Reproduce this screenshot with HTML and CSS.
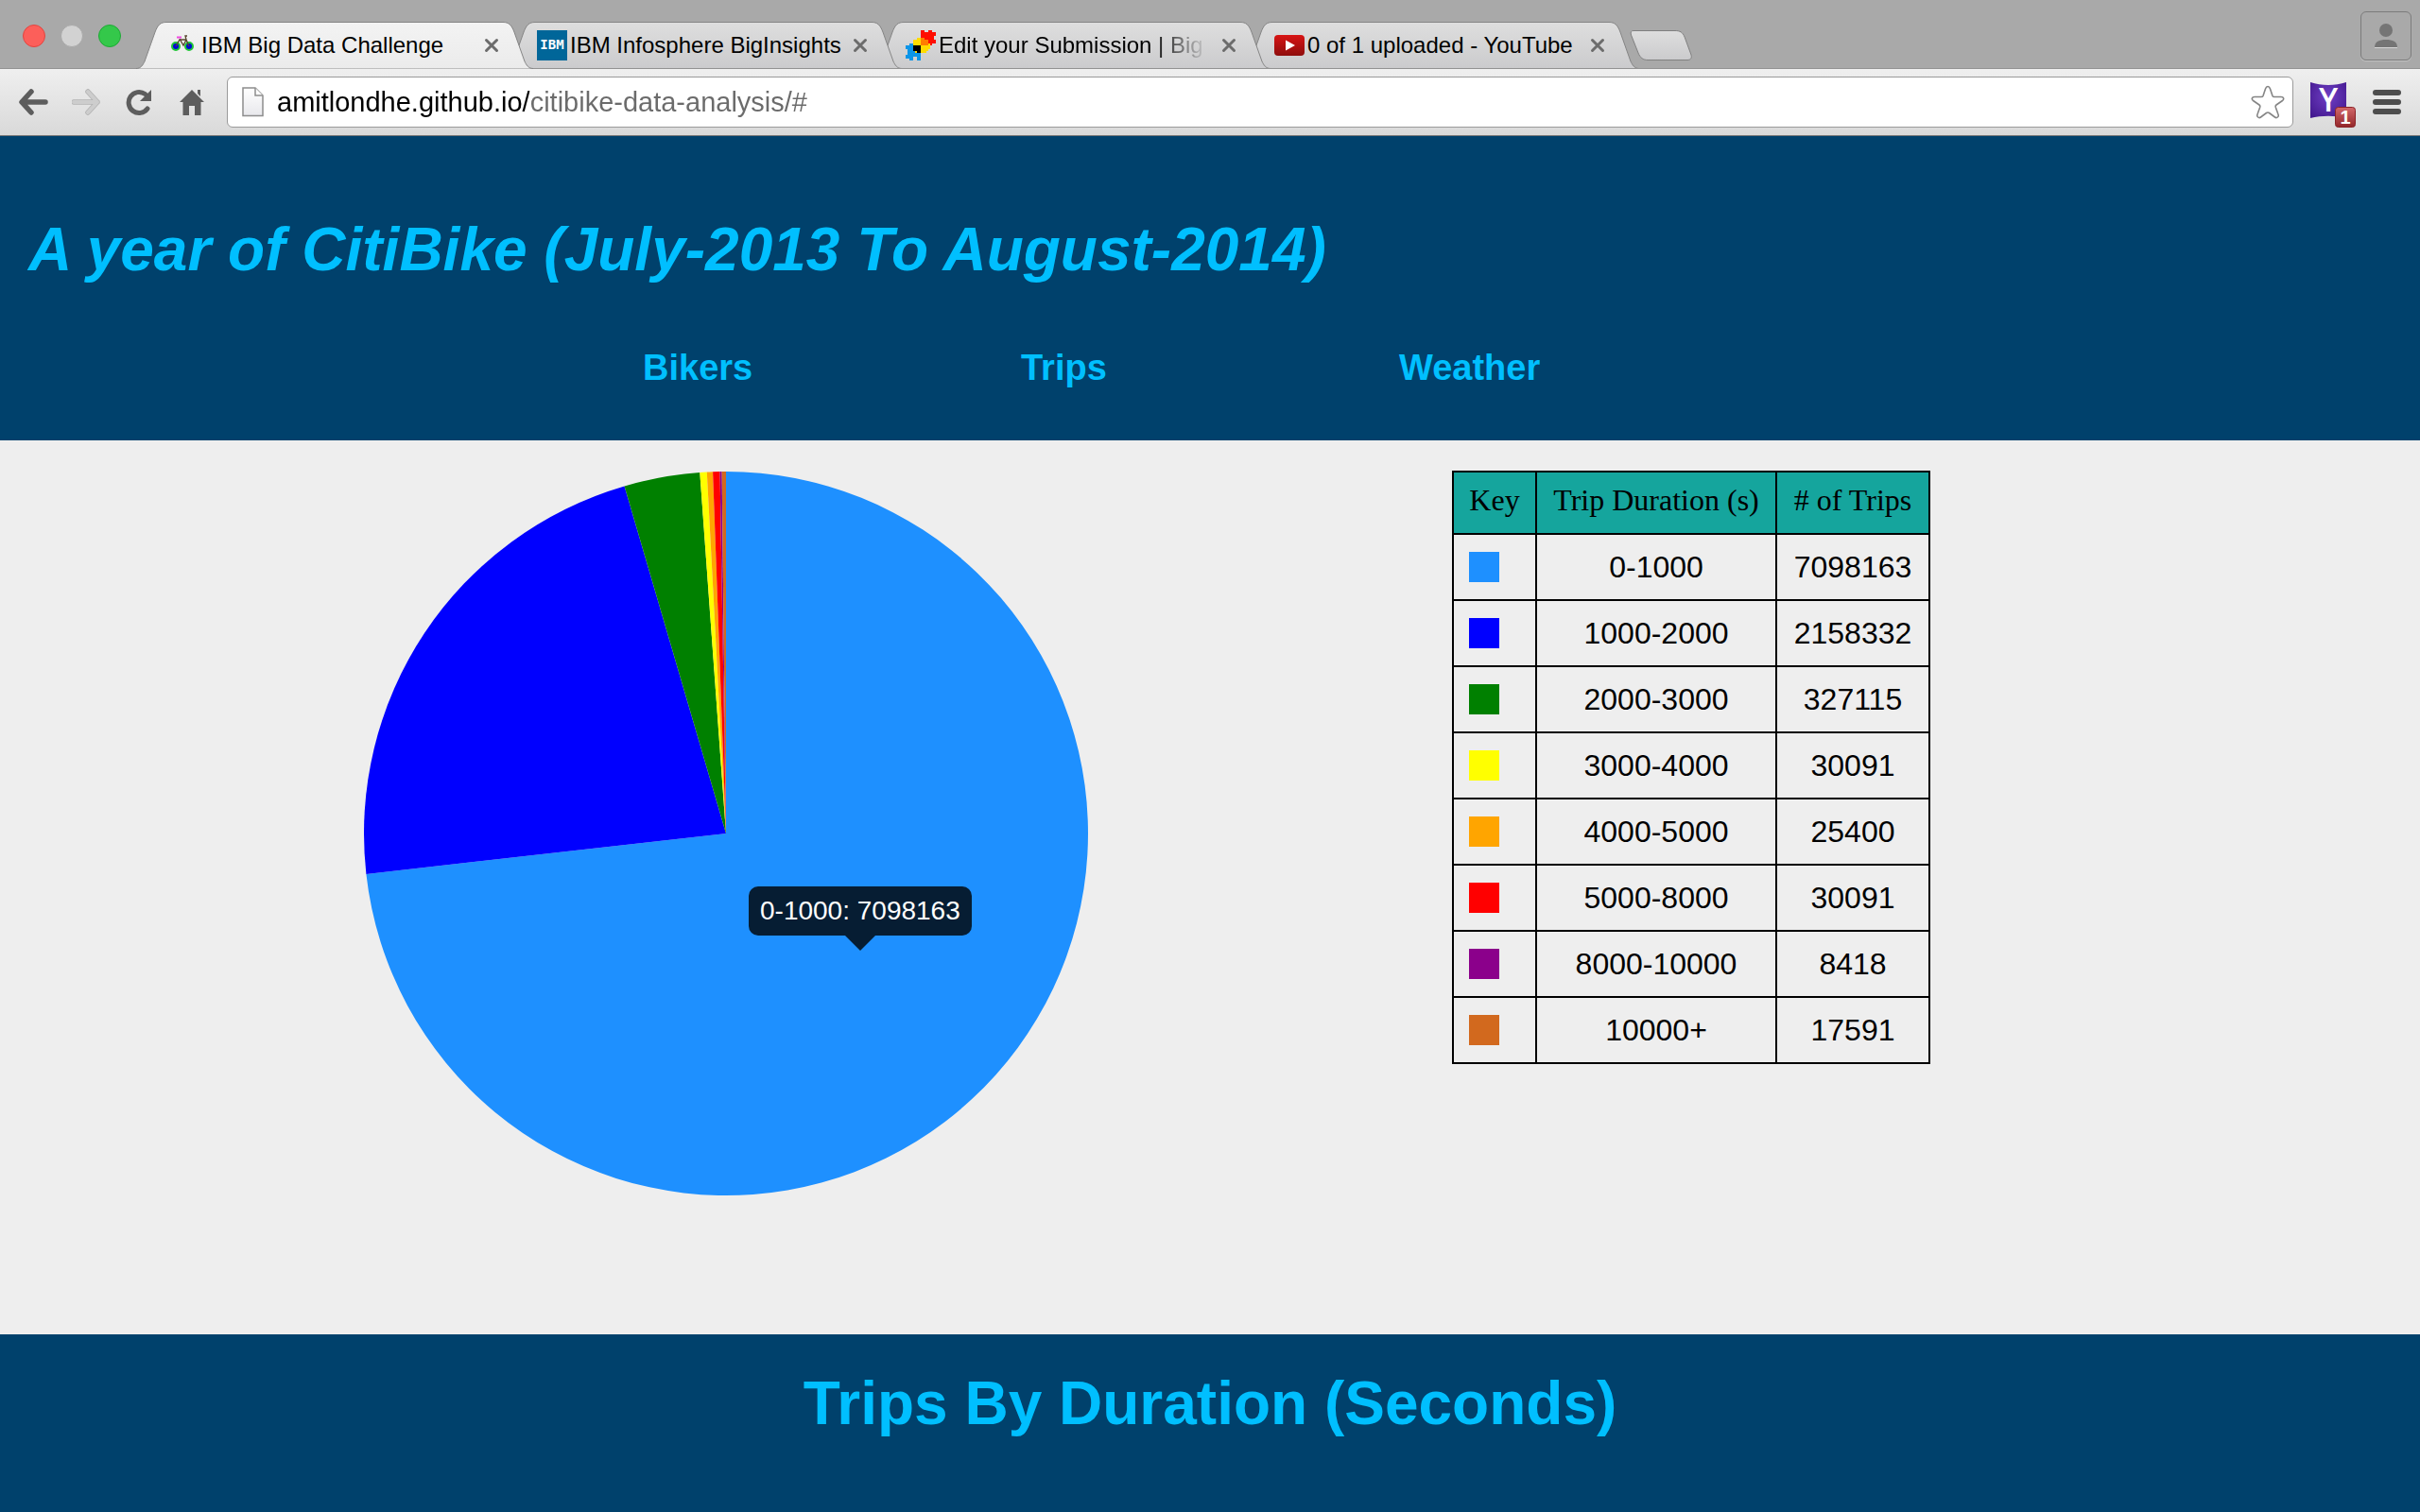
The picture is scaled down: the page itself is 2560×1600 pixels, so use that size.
FILE: index.html
```html
<!DOCTYPE html>
<html lang="en">
<head>
<meta charset="utf-8">
<title>IBM Big Data Challenge</title>
<link rel="stylesheet" href="styles.css">
</head>
<body>
<svg class="defs" aria-hidden="true">
  <defs>
    <linearGradient id="tab-on" x1="0" y1="0" x2="0" y2="1"><stop offset="0" stop-color="#f3f3f3"/><stop offset="1" stop-color="#ebebeb"/></linearGradient>
    <linearGradient id="tab-off" x1="0" y1="0" x2="0" y2="1"><stop offset="0" stop-color="#dedede"/><stop offset="1" stop-color="#cbcbcd"/></linearGradient>
    <linearGradient id="play-red" x1="0" y1="0" x2="0" y2="1"><stop offset="0" stop-color="#d81414"/><stop offset="1" stop-color="#8e0d0d"/></linearGradient>
    <linearGradient id="paper" x1="0" y1="0" x2="0" y2="1"><stop offset="0" stop-color="#fff"/><stop offset="1" stop-color="#e8e8ec"/></linearGradient>
    <radialGradient id="purple" cx=".5" cy=".4" r=".7"><stop offset="0" stop-color="#6f3fc4"/><stop offset="1" stop-color="#43188f"/></radialGradient>
    <linearGradient id="badge" x1="0" y1="0" x2="0" y2="1"><stop offset="0" stop-color="#d2686a"/><stop offset="1" stop-color="#93262a"/></linearGradient>
    <path id="tab-shape" d="M0 49.5C5 49.5 7 46 9 42L20 11C23 3 26 .5 32 .5H388C394 .5 397 3 400 11L411 42C413 46 415 49.5 420 49.5"/>
    <path id="cross" d="M4.500 4.500L15.500 15.500M15.500 4.500L4.500 15.500" fill="none" stroke="#6c6c6c" stroke-width="3" stroke-linecap="round"/>
  </defs>
</svg>

<div class="browser">
  <div class="strip">
    <div class="lights">
      <button class="light close" aria-label="Close window"></button>
      <button class="light mini" aria-label="Minimize window"></button>
      <button class="light full" aria-label="Enter full screen"></button>
    </div>
    <div class="tabs">
      <div class="tab active">
        <svg class="shape" viewBox="0 0 420 50"><use href="#tab-shape" fill="url(#tab-on)" stroke="#858585"/></svg>
        <svg class="favicon" viewBox="0 0 32 32">
          <circle cx="8" cy="17" r="4" fill="#0008d8" stroke="#20c637" stroke-width="2"/>
          <circle cx="22" cy="17" r="4" fill="#0008d8" stroke="#20c637" stroke-width="2"/>
          <path d="M8 17L12 10H19L22 17M12 9L16 16L19 10L18 6H20" fill="none" stroke="#58462f" stroke-width="1.300"/>
          <path d="M9 7.500H14" stroke="#f04be0" stroke-width="2"/>
        </svg>
        <span class="title">IBM Big Data Challenge</span>
        <button class="tab-close" aria-label="Close tab"><svg viewBox="0 0 20 20"><use href="#cross"/></svg></button>
      </div>
      <div class="tab second">
        <svg class="shape" viewBox="0 0 420 50"><use href="#tab-shape" fill="url(#tab-off)" stroke="#858585"/></svg>
        <svg class="favicon" viewBox="0 0 32 32">
          <rect width="32" height="32" fill="#006699"/>
          <text x="16" y="20" text-anchor="middle" class="ibm">IBM</text>
        </svg>
        <span class="title">IBM Infosphere BigInsights</span>
        <button class="tab-close" aria-label="Close tab"><svg viewBox="0 0 20 20"><use href="#cross"/></svg></button>
      </div>
      <div class="tab third">
        <svg class="shape" viewBox="0 0 420 50"><use href="#tab-shape" fill="url(#tab-off)" stroke="#858585"/></svg>
        <svg class="favicon" viewBox="0 0 32 32" shape-rendering="crispEdges">
          <path d="M16 0H20V2H24V0H28V2H32V6H30V10H32V14H28V16H24V14H16Z" fill="#ff0d00"/>
          <path d="M0 16H4V14H8V16H16V32H12V28H8V32H4V30H0V26H2V20H0Z" fill="#0c95e8"/>
          <path d="M12 8H20V10H24V14H26V20H24V22H22V24H10V22H8V10H12Z" fill="#ffdc00"/>
          <path d="M16 8H20V10H24V16H16Z" fill="#ff7d00"/>
          <path d="M8 16H16V24H12V22H8Z" fill="#000"/>
        </svg>
        <span class="title faded">Edit your Submission | Big</span>
        <button class="tab-close" aria-label="Close tab"><svg viewBox="0 0 20 20"><use href="#cross"/></svg></button>
      </div>
      <div class="tab fourth">
        <svg class="shape" viewBox="0 0 420 50"><use href="#tab-shape" fill="url(#tab-off)" stroke="#858585"/></svg>
        <svg class="favicon" viewBox="0 0 32 32">
          <rect y="5" width="32" height="22" rx="4" fill="url(#play-red)"/>
          <path d="M12 10.500L22 16L12 21.500Z" fill="#fff"/>
        </svg>
        <span class="title">0 of 1 uploaded - YouTube</span>
        <button class="tab-close" aria-label="Close tab"><svg viewBox="0 0 20 20"><use href="#cross"/></svg></button>
      </div>
    </div>
    <button class="new-tab" aria-label="New tab"><svg viewBox="0 0 66 32"><path d="M4 .5H48C53 .5 56 2 58 7L65 26C66 30 64 31.500 61 31.500H19C14 31.500 11 29 9 24L1.500 5C.5 2 1.500 .5 4 .5Z" fill="url(#tab-off)" stroke="#808080"/></svg></button>
    <button class="profile" aria-label="Profile"><svg viewBox="0 0 24 26"><path d="M0 25.500H24" stroke="#d8d8d8"/><circle cx="12" cy="7" r="7" fill="#757575"/><path d="M0 25C0 19 5 17 12 17S24 19 24 25Z" fill="#757575"/></svg></button>
  </div>

  <div class="toolbar">
    <div class="nav-buttons">
      <button class="tool" aria-label="Back"><svg viewBox="0 0 32 28"><path d="M28 14H4M13 3L3 14L13 25" fill="none" stroke="#5d5d5d" stroke-width="5.500" stroke-linecap="round" stroke-linejoin="round"/></svg></button>
      <button class="tool" aria-label="Forward"><svg viewBox="0 0 32 28"><path d="M2 14H27M17 3L27 14L17 25" fill="none" stroke="#b2b2b2" stroke-width="5.500" stroke-linecap="round" stroke-linejoin="round"/><path d="M2 14H27M17 3L27 14L17 25" fill="none" stroke="#cdcdcd" stroke-width="4" stroke-linecap="round" stroke-linejoin="round"/></svg></button>
      <button class="tool" aria-label="Reload"><svg viewBox="0 0 32 28"><path d="M24 21A11 11 0 1 1 21.500 5.500" fill="none" stroke="#5d5d5d" stroke-width="5" stroke-linecap="round"/><path d="M28 1V13H16Z" fill="#5d5d5d"/></svg></button>
      <button class="tool" aria-label="Home"><svg viewBox="0 0 32 28"><path d="M15 1L28 14H24.500V28H18V18H12V28H5.500V14H2ZM21 1H24V8L21 5Z" fill="#5d5d5d"/></svg></button>
    </div>
    <div class="omnibox">
      <svg class="page-icon" viewBox="0 0 24 32"><path d="M1 1H14L22 9V30.500H1Z" fill="url(#paper)" stroke="#8d8d8d" stroke-width="1.500"/><path d="M14 1V9H22" fill="#fff" stroke="#8d8d8d" stroke-width="1.500"/></svg>
      <input class="url" type="text" aria-label="Address" value="amitlondhe.github.io/citibike-data-analysis/#">
      <button class="star" aria-label="Bookmark this page"><svg viewBox="0 0 36 36"><path d="M18 1.500C19.500 1.500 20 2.500 20.500 4L23 11.500C23.300 12.300 24 12.500 25 12.500H32C35 12.500 35.500 15 33.500 16.500L27 21C26 21.700 26 22.500 26.300 23.500L29 31C30 33.500 27.500 35.500 25.500 34L19.500 29.500C18.500 28.800 17.500 28.800 16.500 29.500L10.500 34C8.500 35.500 6 33.500 7 31L9.700 23.500C10 22.500 10 21.700 9 21L2.500 16.500C.5 15 1 12.500 4 12.500H11C12 12.500 12.700 12.300 13 11.500L15.500 4C16 2.500 16.500 1.500 18 1.500Z" fill="#fff" stroke="#858585" stroke-width="1.600"/></svg></button>
    </div>
    <button class="extension" aria-label="Yahoo Mail, 1 unread">
      <svg viewBox="0 0 48 50">
        <path d="M0 1C12 5 26 5 38 1V39C26 36 12 36 0 39Z" fill="url(#purple)"/>
        <text x="19" y="32" text-anchor="middle" class="letter">Y</text>
        <rect x="26.500" y="27.500" width="21" height="21" rx="3" fill="url(#badge)" stroke="#8a2327"/>
        <text x="37" y="45" text-anchor="middle" class="count">1</text>
      </svg>
    </button>
    <button class="menu" aria-label="Menu"><svg viewBox="0 0 30 28"><path d="M3 4H27M3 14H27M3 24H27" stroke="#4d4d4d" stroke-width="6" stroke-linecap="round"/></svg></button>
  </div>
</div>

<header class="masthead">
  <h1 class="headline">A year of CitiBike (July-2013 To August-2014)</h1>
  <nav>
    <ul class="sections">
      <li><a href="#">Bikers</a></li>
      <li><a href="#">Trips</a></li>
      <li><a href="#">Weather</a></li>
    </ul>
  </nav>
</header>

<main class="content">
  <div class="chart">
    <svg class="pie" viewBox="-384 -384 768 768" role="img" aria-label="Trips by duration">
      <path fill="#1e90ff" d="M0 0V-383A383 383 0 1 1 -380.590 42.920Z"/>
      <path fill="#0000ff" d="M0 0L-380.590 42.920A383 383 0 0 1 -107.430 -367.620Z"/>
      <path fill="#008000" d="M0 0L-107.430 -367.620A383 383 0 0 1 -27.670 -382Z"/>
      <path fill="#ffff00" d="M0 0L-27.670 -382A383 383 0 0 1 -20.220 -382.470Z"/>
      <path fill="#ffa500" d="M0 0L-20.220 -382.470A383 383 0 0 1 -13.920 -382.750Z"/>
      <path fill="#ff0000" d="M0 0L-13.920 -382.750A383 383 0 0 1 -6.460 -382.950Z"/>
      <path fill="#8b008b" d="M0 0L-6.460 -382.950A383 383 0 0 1 -4.370 -382.980Z"/>
      <path fill="#d2691e" d="M0 0L-4.370 -382.980A383 383 0 0 1 0 -383Z"/>
    </svg>
    <div class="tooltip" role="tooltip">0-1000: 7098163</div>
  </div>
  <table class="legend">
    <thead>
      <tr><th class="key">Key</th><th class="range">Trip Duration (s)</th><th class="trips"># of Trips</th></tr>
    </thead>
    <tbody>
      <tr><td><div class="swatch dodger"></div></td><td>0-1000</td><td>7098163</td></tr>
      <tr><td><div class="swatch blue"></div></td><td>1000-2000</td><td>2158332</td></tr>
      <tr><td><div class="swatch green"></div></td><td>2000-3000</td><td>327115</td></tr>
      <tr><td><div class="swatch yellow"></div></td><td>3000-4000</td><td>30091</td></tr>
      <tr><td><div class="swatch orange"></div></td><td>4000-5000</td><td>25400</td></tr>
      <tr><td><div class="swatch red"></div></td><td>5000-8000</td><td>30091</td></tr>
      <tr><td><div class="swatch magenta"></div></td><td>8000-10000</td><td>8418</td></tr>
      <tr><td><div class="swatch chocolate"></div></td><td>10000+</td><td>17591</td></tr>
    </tbody>
  </table>
</main>

<footer class="caption">
  <h2>Trips By Duration (Seconds)</h2>
</footer>
</body>
</html>
```
FILE: styles.css
```css
* {
  box-sizing: border-box;
}

body {
  display: flex;
  flex-direction: column;
  min-height: 100vh;
  margin: 0;
  background: #eeeeee;
  color: #000;
  font-family: "Liberation Sans", Arial, sans-serif;
}

button {
  flex: none;
  padding: 0;
  border: 0;
  background: none;
}

svg {
  display: block;
}

.defs {
  position: absolute;
  width: 0;
  height: 0;
}

/* Browser frame */

.strip {
  display: flex;
  align-items: flex-end;
  height: 72px;
  padding-right: 9px;
  background: #a9a9a9;
}

.lights {
  display: flex;
  flex: none;
  align-self: center;
  gap: 16px;
  width: 144px;
  padding: 4px 0 0 24px;
}

.light {
  width: 24px;
  height: 24px;
  border-radius: 50%;
}

.close {
  border: 1px solid #e2443f;
  background: #fc5f5a;
}

.mini {
  border: 1px solid #a9a9a9;
  background: #d2d2d2;
}

.full {
  border: 1px solid #1ea935;
  background: #34c84a;
}

.tabs {
  display: flex;
  margin-bottom: -1px;
}

.tab {
  position: relative;
  display: flex;
  align-items: center;
  width: 420px;
  height: 50px;
  margin-right: -30px;
  padding: 0 34px;
}

.active {
  z-index: 5;
}

.second {
  z-index: 3;
}

.third {
  z-index: 2;
}

.fourth {
  z-index: 1;
}

.shape {
  position: absolute;
  inset: 0;
  z-index: -1;
  width: 420px;
  height: 50px;
}

.favicon {
  flex: none;
  width: 32px;
  height: 32px;
}

.ibm {
  fill: #fff;
  font: bold 14px "DejaVu Sans Mono", monospace;
}

.title {
  flex: 1;
  min-width: 0;
  margin-left: 3px;
  overflow: hidden;
  font-size: 24px;
  line-height: 32px;
  white-space: nowrap;
}

.faded {
  -webkit-mask-image: linear-gradient(to left, transparent 12px, #000 72px);
  mask-image: linear-gradient(to left, transparent 12px, #000 72px);
}

.tab-close {
  width: 20px;
  height: 20px;
}

.new-tab {
  width: 66px;
  height: 32px;
  margin: 0 auto 8px 20px;
}

.profile {
  display: flex;
  align-items: center;
  justify-content: center;
  align-self: center;
  width: 54px;
  height: 52px;
  margin-top: 4px;
  border: 1px solid #7b7b7b;
  border-radius: 6px;
  box-shadow: 0 1px 1px #c4c4c4;
}

.profile svg {
  width: 24px;
  height: 26px;
}

.toolbar {
  position: relative;
  z-index: 4;
  display: flex;
  align-items: center;
  height: 72px;
  padding: 0 20px;
  border-top: 1px solid #929292;
  border-bottom: 1px solid #777;
  background: linear-gradient(#efefef, #d9d9d9);
}

.nav-buttons {
  display: flex;
  gap: 24px;
  margin-right: 20px;
}

.tool {
  width: 32px;
  height: 28px;
}

.omnibox {
  display: flex;
  flex: 1;
  align-items: center;
  height: 54px;
  padding: 0 8px 0 15px;
  border: 1px solid #9a9a9a;
  border-radius: 6px;
  background: #fff;
}

.page-icon {
  flex: none;
  width: 24px;
  height: 32px;
}

.url {
  flex: 1;
  min-width: 0;
  margin-left: 13px;
  padding: 0;
  border: 0;
  outline: 0;
  background: linear-gradient(to right, #000 267px, #6b6b6b 267px);
  -webkit-background-clip: text;
  background-clip: text;
  color: transparent;
  font: 29px/40px "Liberation Sans", Arial, sans-serif;
}

.star {
  width: 36px;
  height: 36px;
}

.extension {
  width: 48px;
  height: 50px;
  margin: 6px 18px 0;
}

.extension svg {
  overflow: visible;
}

.letter {
  fill: #fff;
  font: 600 34px "Open Sans", sans-serif;
}

.count {
  fill: #fff;
  font: bold 20px "Liberation Sans", Arial, sans-serif;
}

.menu {
  width: 30px;
  height: 28px;
}

/* Page */

.masthead {
  padding: 84px 0 55px;
  background: #00416c;
  color: #00bfff;
}

.headline {
  margin: 0 0 67px 30px;
  font-size: 64px;
  font-style: italic;
  line-height: 72px;
}

.sections {
  display: grid;
  grid-template-columns: repeat(3, 400px);
  justify-content: center;
  margin: 0;
  padding: 0;
  list-style: none;
  font-size: 38px;
  font-weight: bold;
  line-height: 44px;
}

.sections a {
  color: inherit;
  text-decoration: none;
}

.content {
  display: grid;
  grid-template-columns: 30vw auto;
  column-gap: 15vw;
  align-items: start;
  justify-items: start;
  padding: 32px 0 146px 15vw;
}

.chart {
  position: relative;
  width: 100%;
}

.pie {
  width: 100%;
}

.tooltip {
  position: absolute;
  top: 440px;
  left: 408px;
  padding: 10px 12px;
  border-radius: 10px;
  background: #061d33;
  color: #fff;
  font-size: 28px;
  line-height: 32px;
  white-space: nowrap;
}

.tooltip::after {
  content: "";
  position: absolute;
  top: 100%;
  left: 50%;
  margin-left: -16px;
  border: 16px solid transparent;
  border-top-color: #061d33;
  border-bottom: 0;
}

.legend {
  border-collapse: collapse;
  font-size: 32px;
  line-height: 36px;
  text-align: center;
}

.legend th,
.legend td {
  padding: 16px;
  border: 2px solid #000;
}

.legend th {
  padding: 13px 16px 19px;
  background: #15a59d;
  font-family: "Liberation Serif", "Times New Roman", serif;
  font-weight: normal;
  line-height: 32px;
}

.key {
  width: 88px;
}

.range {
  width: 254px;
}

.trips {
  width: 162px;
}

.swatch {
  width: 32px;
  height: 32px;
}

.dodger { background: #1e90ff; }
.blue { background: #0000ff; }
.green { background: #008000; }
.yellow { background: #ffff00; }
.orange { background: #ffa500; }
.red { background: #ff0000; }
.magenta { background: #8b008b; }
.chocolate { background: #d2691e; }

.caption {
  flex: 1;
  padding: 37px 0;
  background: #00416c;
  color: #00bfff;
  text-align: center;
}

.caption h2 {
  margin: 0;
  font-size: 64px;
  line-height: 72px;
}
```
